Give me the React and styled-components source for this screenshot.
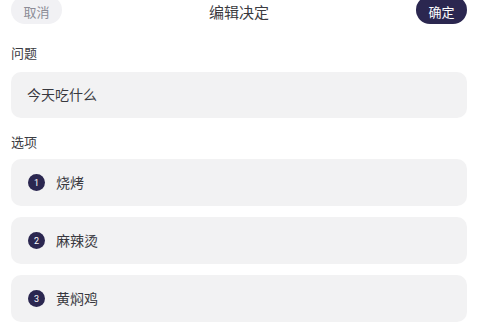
import React from 'react';
import styled, { createGlobalStyle } from 'styled-components';

const GlobalStyle = createGlobalStyle`
  body {
    margin: 0;
    background: #ffffff;
    font-family: "Noto Sans CJK SC", "Noto Sans", sans-serif;
    color: #333338;
  }
`;

const Page = styled.div`
  display: flex;
  flex-direction: column;
  padding: 0 13px 0 11px;
  overflow: hidden;
`;

const Header = styled.div`
  display: flex;
  align-items: center;
  justify-content: space-between;
  height: 28px;
  margin-top: -4px;
  position: relative;
`;

const Title = styled.div`
  position: absolute;
  left: 0;
  right: 0;
  padding-top: 2px;
  text-align: center;
  font-size: 15px;
  color: #3a3a40;
  pointer-events: none;
`;

const PillButton = styled.button`
  height: 28px;
  width: 51px;
  border: none;
  border-radius: 14px;
  font-family: inherit;
  font-size: 13px;
  padding: 2px 0 0;
  background: ${p => (p.primary ? '#2b2750' : '#f1f1f4')};
  color: ${p => (p.primary ? '#ffffff' : '#8c8c96')};
  position: relative;
  z-index: 1;
`;

const Label = styled.div`
  font-size: 13px;
  line-height: 18px;
  color: #3c3c42;
  margin-top: ${p => p.top}px;
`;

const Field = styled.div`
  display: flex;
  align-items: center;
  box-sizing: border-box;
  height: ${p => p.h || 46}px;
  border-radius: 10px;
  background: #f2f2f3;
  padding: 0 0 2px 16px;
  font-size: 14px;
  color: #38383e;
  margin-top: ${p => p.top}px;
`;

const Options = styled.div`
  display: flex;
  flex-direction: column;
  gap: 11px;
  margin-top: 8px;
`;

const Badge = styled.span`
  width: 17px;
  height: 17px;
  border-radius: 50%;
  background: #2b2750;
  color: #fff;
  font-family: "Roboto", "Liberation Sans", sans-serif;
  font-size: 9px;
  display: inline-flex;
  align-items: center;
  justify-content: center;
  margin-left: 1px;
  margin-right: 11px;
  margin-top: 2px;
`;

const options = ['烧烤', '麻辣烫', '黄焖鸡'];

export default function App() {
  return (
    <>
      <GlobalStyle />
      <Page>
        <Header>
          <PillButton>取消</PillButton>
          <Title>编辑决定</Title>
          <PillButton primary>确定</PillButton>
        </Header>
        <Label top={20}>问题</Label>
        <Field top={10}>今天吃什么</Field>
        <Label top={15}>选项</Label>
        <Options>
          {options.map((o, i) => (
            <Field key={o} h={47}>
              <Badge>{i + 1}</Badge>
              {o}
            </Field>
          ))}
        </Options>
      </Page>
    </>
  );
}
